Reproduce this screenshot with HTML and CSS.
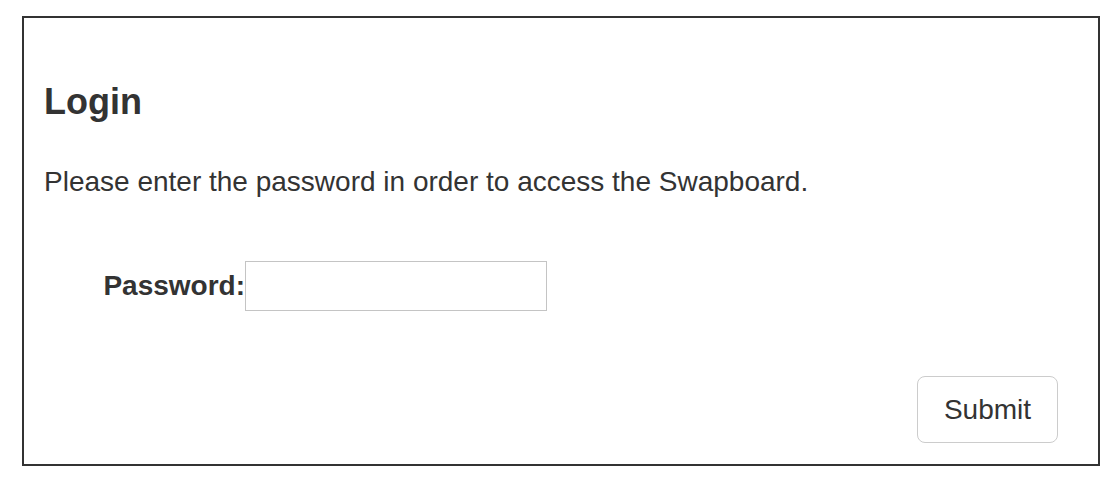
FILE: index.html
```html
<!DOCTYPE html>
<html lang="en">
<head>
<meta charset="UTF-8">
<meta name="viewport" content="width=device-width, initial-scale=1.0">
<title>Swapboard Login</title>
<link rel="stylesheet" href="styles.css">
</head>
<body>

<div class="panel">
<h4 class="title">Login</h4>

<p class="intro">Please enter the password in order to access the Swapboard.</p>

<form class="login-form" onsubmit="return false;">
<div class="form-row">
<label for="password" class="form-label">Password:</label>
<input type="password" id="password" class="form-input">
</div>

<div class="form-actions">
<button type="submit" class="button">Submit</button>
</div>
</form>
</div>

</body>
</html>
```

FILE: styles.css
```css
body {
font-family: "Liberation Sans", Arial, sans-serif;
font-size: 28px;
line-height: 40px;
color: #333;
background-color: #fff;
margin: 0;
}

.panel {
margin: 16px 18px 20px 22px;
border: 2px solid #333;
padding: 64px 40px 21px 20px;
}

.title {
font-size: 36px;
font-weight: bold;
line-height: 40px;
margin: 0 0 40px;
}

.intro {
margin: 0 0 59px;
}

.login-form {
margin: 0;
}

.form-row {
display: flex;
align-items: center;
}

.form-label {
width: 201px;
text-align: right;
font-weight: bold;
}

.form-input {
width: 302px;
height: 50px;
border: 1px solid #c4c4c4;
border-radius: 0;
padding: 0 10px;
font-size: 28px;
box-sizing: border-box;
}

.form-actions {
display: flex;
justify-content: flex-end;
margin-top: 65px;
}

.button {
width: 141px;
height: 67px;
padding: 0;
font-family: "Liberation Sans", Arial, sans-serif;
font-size: 28px;
line-height: 40px;
color: #333;
background-color: #fff;
border: 1px solid #ccc;
border-radius: 8px;
cursor: pointer;
}
```
